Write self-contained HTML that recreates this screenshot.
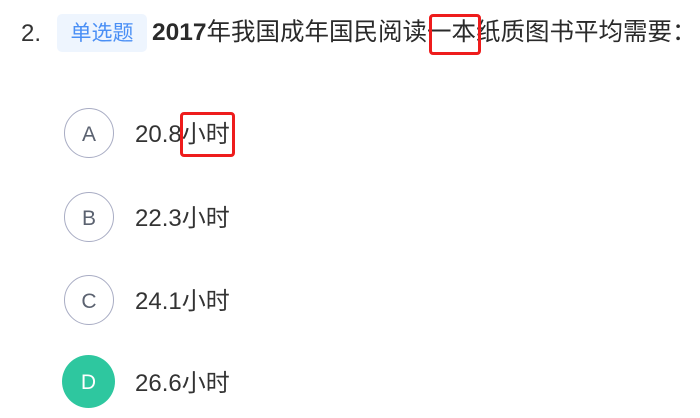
<!DOCTYPE html>
<html><head><meta charset="utf-8"><style>
html,body{margin:0;padding:0;width:700px;height:418px;background:#fff;overflow:hidden;position:relative;
font-family:"Liberation Sans","Noto Sans CJK SC",sans-serif;color:#333;}
.a{position:absolute;white-space:nowrap;}
.num{left:21px;top:20px;font-size:24px;color:#333;}
.tag{left:57px;top:14px;width:90px;height:38px;background:#eef5fe;border-radius:5px;color:#4a8ff5;font-size:21px;line-height:40px;text-align:center;}
.title{left:152px;top:16px;font-size:24.5px;font-weight:normal;color:#2a2a2a;line-height:34px;}
.title b{font-weight:bold;}
.box{position:absolute;border:3px solid #ee1c1c;border-radius:4px;box-sizing:border-box;}
.c{position:absolute;width:50px;height:50px;border:1px solid #a9adc4;border-radius:50%;box-sizing:border-box;text-align:center;line-height:52px;font-size:21px;color:#5b6270;}
.d{background:#2ec79f;border:none;color:#fff;width:53px;height:53px;line-height:55px;}
.t{position:absolute;left:135px;font-size:24px;line-height:30px;color:#333;}
</style></head><body>
<div class="a num">2.</div>
<div class="a tag">单选题</div>
<div class="a title"><b>2017</b>年我国成年国民阅读一本纸质图书平均需要：</div>
<div class="box" style="left:429px;top:14px;width:52px;height:41px;"></div>

<div class="c" style="left:64px;top:108px;">A</div>
<div class="t" style="top:120px;">20.8小时</div>
<div class="box" style="left:180px;top:112px;width:55px;height:45px;"></div>

<div class="c" style="left:64px;top:192px;">B</div>
<div class="t" style="top:204px;">22.3小时</div>

<div class="c" style="left:64px;top:275px;">C</div>
<div class="t" style="top:287px;">24.1小时</div>

<div class="c d" style="left:62px;top:355px;">D</div>
<div class="t" style="top:369px;">26.6小时</div>
</body></html>
